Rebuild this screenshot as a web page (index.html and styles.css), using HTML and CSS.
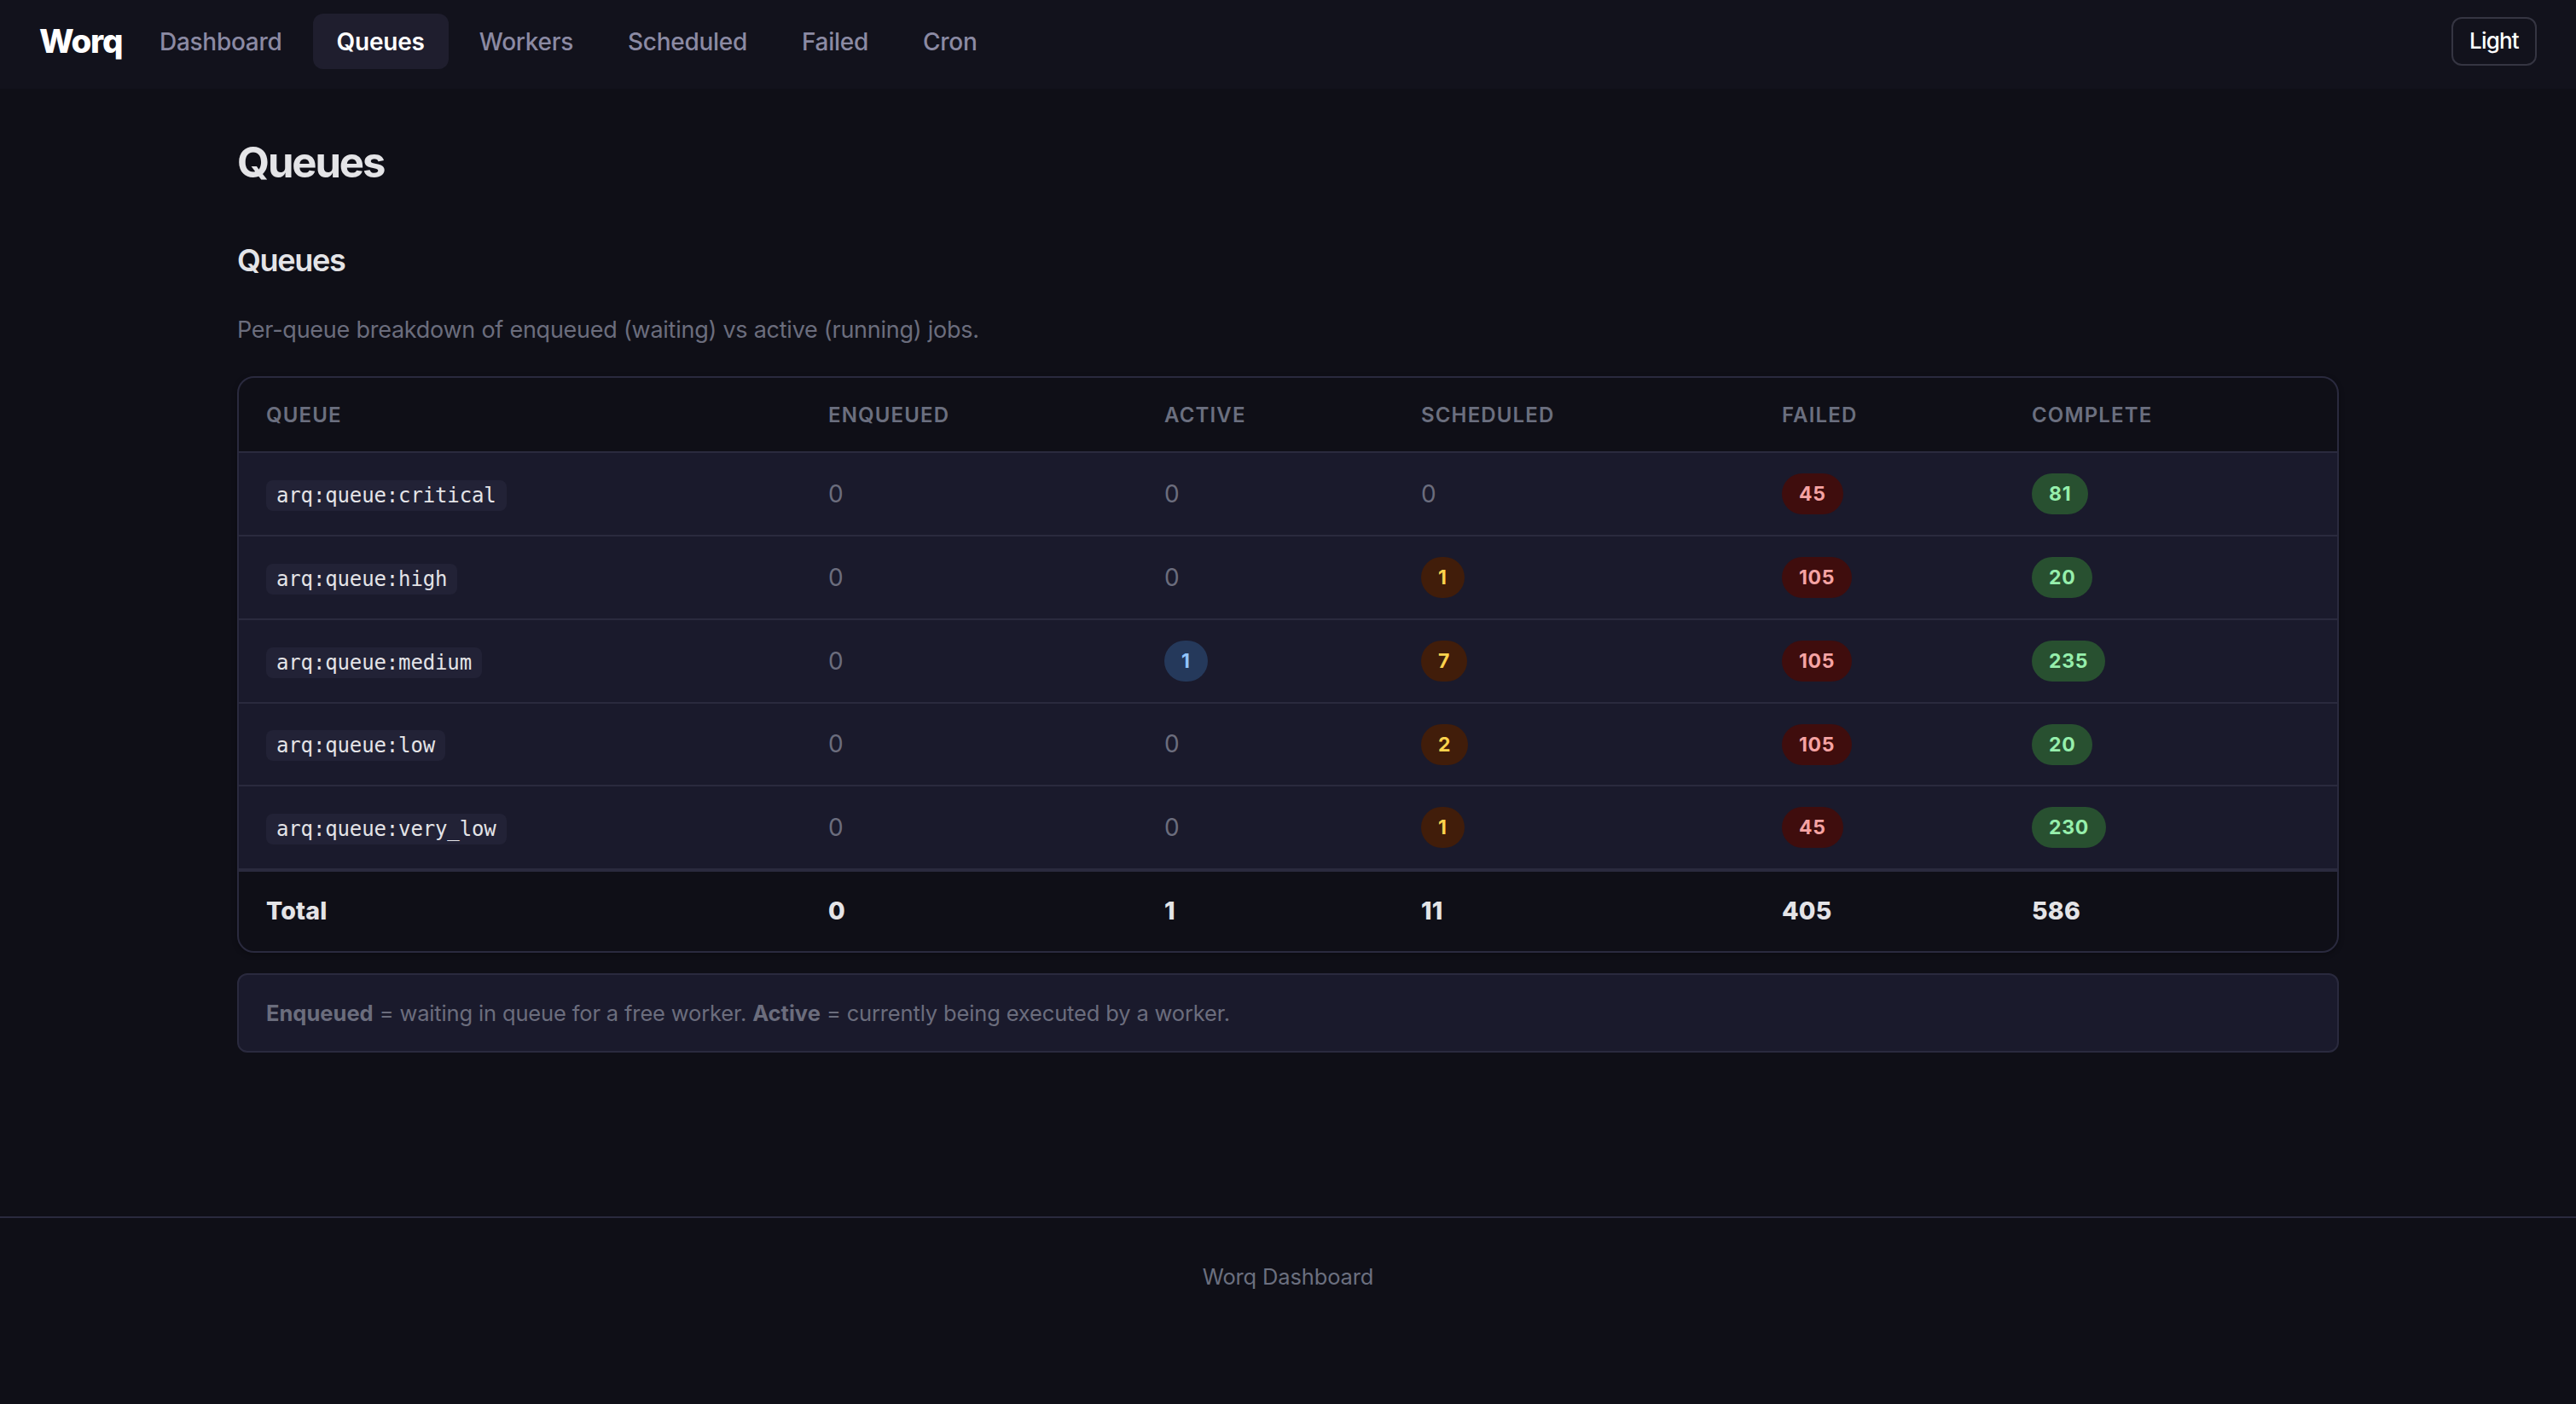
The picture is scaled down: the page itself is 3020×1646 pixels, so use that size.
FILE: index.html
```html
<!DOCTYPE html>
<html lang="en">
<head>
  <meta charset="UTF-8">
  <meta name="viewport" content="width=device-width, initial-scale=1.0">
  <title>Queues - Worq Dashboard</title>
  <link rel="stylesheet" href="styles.css">
</head>
<body>
  <nav class="navbar">
    <a class="brand" href="#">Worq</a>
    <div class="nav-links">
      <a href="#">Dashboard</a>
      <a class="active" href="#">Queues</a>
      <a href="#">Workers</a>
      <a href="#">Scheduled</a>
      <a href="#">Failed</a>
      <a href="#">Cron</a>
    </div>
    <button class="theme-toggle" type="button">Light</button>
  </nav>

  <main class="container">
    <h1>Queues</h1>
    <h2>Queues</h2>
    <p class="lead">Per-queue breakdown of enqueued (waiting) vs active (running) jobs.</p>

    <div class="table-wrap">
      <table>
        <colgroup>
          <col class="col-queue">
          <col class="col-enqueued">
          <col class="col-active">
          <col class="col-scheduled">
          <col class="col-failed">
          <col class="col-complete">
        </colgroup>
        <thead>
          <tr>
            <th>Queue</th>
            <th>Enqueued</th>
            <th>Active</th>
            <th>Scheduled</th>
            <th>Failed</th>
            <th>Complete</th>
          </tr>
        </thead>
        <tbody>
          <tr>
            <td><code>arq:queue:critical</code></td>
            <td>0</td>
            <td>0</td>
            <td>0</td>
            <td><span class="badge failed">45</span></td>
            <td><span class="badge complete">81</span></td>
          </tr>
          <tr>
            <td><code>arq:queue:high</code></td>
            <td>0</td>
            <td>0</td>
            <td><span class="badge scheduled">1</span></td>
            <td><span class="badge failed">105</span></td>
            <td><span class="badge complete">20</span></td>
          </tr>
          <tr>
            <td><code>arq:queue:medium</code></td>
            <td>0</td>
            <td><span class="badge running">1</span></td>
            <td><span class="badge scheduled">7</span></td>
            <td><span class="badge failed">105</span></td>
            <td><span class="badge complete">235</span></td>
          </tr>
          <tr>
            <td><code>arq:queue:low</code></td>
            <td>0</td>
            <td>0</td>
            <td><span class="badge scheduled">2</span></td>
            <td><span class="badge failed">105</span></td>
            <td><span class="badge complete">20</span></td>
          </tr>
          <tr>
            <td><code>arq:queue:very_low</code></td>
            <td>0</td>
            <td>0</td>
            <td><span class="badge scheduled">1</span></td>
            <td><span class="badge failed">45</span></td>
            <td><span class="badge complete">230</span></td>
          </tr>
        </tbody>
        <tfoot>
          <tr>
            <td>Total</td>
            <td>0</td>
            <td>1</td>
            <td>11</td>
            <td>405</td>
            <td>586</td>
          </tr>
        </tfoot>
      </table>
    </div>

    <div class="note"><strong>Enqueued</strong> = waiting in queue for a free worker. <strong>Active</strong> = currently being executed by a worker.</div>
  </main>

  <footer class="footer">Worq Dashboard</footer>
</body>
</html>
```

FILE: styles.css
```css
* {
  box-sizing: border-box;
  margin: 0;
  padding: 0;
}
body {
  background: #0f0f17;
  color: #e4e4e7;
  font-family: Inter, "Liberation Sans", sans-serif;
  font-size: 28px;
  line-height: 1.6;
  min-height: 100vh;
}
a { color: inherit; text-decoration: none; }

/* top bar */
.navbar {
  display: flex;
  align-items: flex-start;
  height: 104px;
  padding: 16px 46px 0;
  background: #12121c;
}
.brand {
  margin-right: 16px;
  width: 97px;
  color: #fff;
  font-size: 38.5px;
  font-weight: 800;
  line-height: 65px;
  letter-spacing: -1.3px;
}
.nav-links {
  display: flex;
  gap: 8px;
}
.nav-links a {
  height: 65px;
  padding: 0 28px;
  border-radius: 12px;
  color: #8b8aa3;
  font-weight: 500;
  line-height: 67px;
  letter-spacing: -0.28px;
}
.nav-links a.active {
  background: #1f1e2e;
  color: #fff;
  font-weight: 600;
  letter-spacing: -0.2px;
}
.theme-toggle {
  margin: 4px 0 0 auto;
  padding-bottom: 2px;
  width: 100px;
  height: 57px;
  border: 2px solid #353542;
  border-radius: 12px;
  background: transparent;
  color: #fff;
  font-family: inherit;
  font-size: 26px;
  font-weight: 500;
  letter-spacing: -0.8px;
}

.container {
  width: 2464px;
  margin: 0 auto;
  padding-top: 48px;
}
h1 {
  font-size: 49px;
  font-weight: 700;
  line-height: 78px;
  letter-spacing: -2.1px;
}
h2 {
  margin-top: 47px;
  font-size: 36px;
  font-weight: 600;
  line-height: 56px;
  letter-spacing: -1.3px;
}
.lead {
  margin-top: 32px;
  color: #6b6d7d;
  font-size: 27px;
  line-height: 44px;
  letter-spacing: -0.25px;
}

/* queue table */
.table-wrap {
  margin-top: 32px;
  border: 2px solid #2a2a3e;
  border-radius: 20px;
  overflow: hidden;
  box-shadow: 0 2px 6px rgba(0, 0, 0, 0.3);
}
table {
  width: 100%;
  table-layout: fixed;
  border-collapse: separate;
  border-spacing: 0;
}
.col-queue { width: 659px; }
.col-enqueued { width: 394px; }
.col-active { width: 301px; }
.col-scheduled { width: 423px; }
.col-failed { width: 293px; }
.col-complete { width: 390px; }
th, td {
  padding: 0 32px;
  text-align: left;
  vertical-align: middle;
}
th {
  height: 88px;
  padding-top: 2px;
  border-bottom: 2px solid #2a2a3e;
  color: #6b6f7f;
  font-size: 24px;
  font-weight: 600;
  letter-spacing: 1.15px;
  text-transform: uppercase;
}
tbody td {
  height: 98px;
  border-bottom: 2px solid #2a2a3e;
  background: #1a1a2c;
  color: #6b6d7d;
}
tbody tr:nth-child(4) td { height: 97px; }
tbody tr:last-child td {
  height: 96px;
  border-bottom: none;
}
tfoot td {
  height: 97px;
  padding-bottom: 1px;
  border-top: 4px solid #2a2a3e;
  font-size: 28.5px;
  font-weight: 800;
  letter-spacing: 0.2px;
}
code {
  display: inline-block;
  padding: 0 12px;
  border-radius: 8px;
  background: #222236;
  color: #e4e4e7;
  font-family: "DejaVu Sans Mono", monospace;
  font-size: 24px;
  line-height: 36px;
  letter-spacing: -0.14px;
}
.badge {
  display: inline-block;
  padding: 0 20px;
  border-radius: 24px;
  font-size: 23px;
  font-weight: 700;
  line-height: 48px;
  letter-spacing: 0.7px;
}
.failed { background: #3f0d0d; color: #f5a3a3; }
.complete { background: #285030; color: #96efac; }
.scheduled { background: #411d0a; color: #fcd34d; }
.running { background: #25395b; color: #93c5fd; }

.note {
  margin-top: 24px;
  height: 93px;
  padding: 0 32px;
  border: 2px solid #2a2a3e;
  border-radius: 12px;
  background: #1a1a2c;
  color: #6b6d7d;
  font-size: 25.5px;
  line-height: 89px;
  letter-spacing: -0.15px;
}
.note strong { letter-spacing: 0; }
.footer {
  margin-top: 192px;
  padding-top: 48px;
  border-top: 2px solid #2a2a3e;
  color: #6b6f7f;
  font-size: 25.5px;
  line-height: 42px;
  letter-spacing: -0.15px;
  text-align: center;
}
```
